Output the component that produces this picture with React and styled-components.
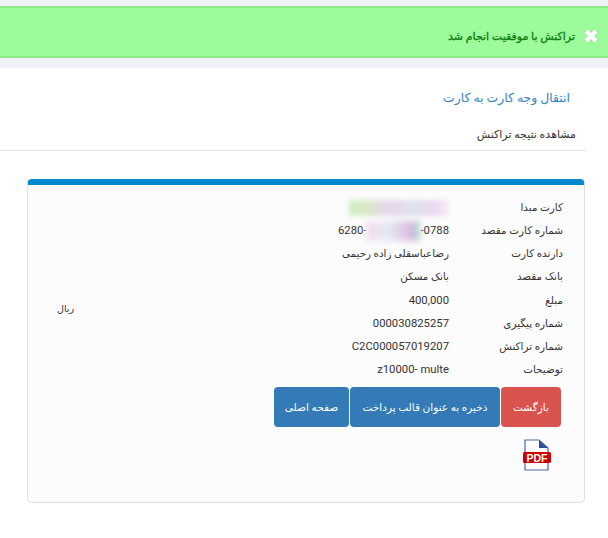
import React from "react"
import styled, { createGlobalStyle } from "styled-components"

const GlobalStyle = createGlobalStyle`
  html, body {
    margin: 0;
    background: #fff;
  }
  body {
    font-family: Roboto, "DejaVu Sans", sans-serif;
    font-size: 11px;
    color: #333;
  }
`

const Page = styled.div`
  direction: rtl;
  width: 608px;
  height: 538px;
  overflow: hidden;
`

const TopBand = styled.div`
  background: #f0f2f7;
  padding: 6px 0 10px;
`

const Alert = styled.div`
  height: 52px;
  box-sizing: border-box;
  border-top: 2px solid #8eec8e;
  border-bottom: 2px solid #8eec8e;
  background: #9cfc9c;
  color: #0f7a0f;
  font-size: 11px;
  -webkit-text-stroke: 0.3px #0f7a0f;
  display: flex;
  align-items: center;
  gap: 8px;
  padding: 8px 9px 0 0;
`

const CloseIcon = styled.svg`
  width: 16px;
  height: 16px;
  flex: none;
`

const PageTitle = styled.h1`
  margin: 0;
  padding: 20px 38px 0 0;
  height: 29px;
  line-height: 20px;
  font-size: 12.4px;
  font-weight: 400;
  color: #2f86c6;
`

const SubTitle = styled.div`
  width: 586px;
  box-sizing: border-box;
  margin-right: 22px;
  height: 34px;
  line-height: 22px;
  padding: 7px 10px 0 0;
  border-bottom: 1px solid #e3e3e3;
  font-size: 11px;
`

const Card = styled.section`
  box-sizing: border-box;
  width: 558px;
  height: 324px;
  margin: 28px 23px 0 0;
  padding: 11px 21px 0 0;
  background: #fcfcfc;
  border: 1px solid #e0e0e0;
  border-top: 6px solid #0088cc;
  border-radius: 5px;
`

const Details = styled.div`
  position: relative;
  width: 536px;
`

const Row = styled.div`
  display: grid;
  grid-template-columns: 114px 1fr;
  height: 23.15px;
  line-height: 23px;
  align-items: center;
`

const Label = styled.div`
  font-size: 10.4px;
  color: #333;
  white-space: nowrap;
`

const Value = styled.div`
  font-size: 10.3px;
  color: #333;
  white-space: nowrap;
`

const Latin = styled.span`
  direction: ltr;
  unicode-bidi: isolate;
  font-family: Roboto, sans-serif;
  font-size: 11.3px;
`

const Blurred = styled.span`
  display: inline-block;
  width: 100px;
  height: 16px;
  vertical-align: middle;
  filter: blur(2.5px);
  background: linear-gradient(
    90deg,
    #cdeec4 0%,
    #d8e8c8 18%,
    #e8d4ec 40%,
    #dfe2ee 62%,
    #ecd6f0 85%,
    #f6ecf8 100%
  );
`

const CardNumber = styled.span`
  direction: ltr;
  unicode-bidi: isolate;
  display: inline-flex;
  align-items: center;
  font-family: Roboto, sans-serif;
  font-size: 11.3px;
`

const Smudge = styled.span`
  display: inline-block;
  width: 54px;
  height: 20px;
  filter: blur(3px);
  background: linear-gradient(90deg, #f6dcf0 0%, #e6e9f4 40%, #dcc4e4 75%, #d0b8dc 88%, #9ee8c4 100%);
`

const Unit = styled.div`
  position: absolute;
  left: 30px;
  top: 104px;
  font-size: 9.5px;
  line-height: 18px;
`

const Actions = styled.div`
  display: flex;
  gap: 1px;
  margin: 6px 2px 0 0;
`

const Button = styled.button`
  height: 40px;
  width: ${p => p.$width}px;
  padding: 0;
  border: 0;
  border-radius: 4px;
  color: #fff;
  font: inherit;
  font-size: 10.5px;
  background: ${p => (p.$danger ? "#d9534f" : "#337ab7")};
`

const PdfIcon = styled.svg`
  display: block;
  width: 30px;
  height: 32px;
  margin: 12px 11px 0 0;
`

const rows = [
  ["کارت مبدا", <Blurred />],
  [
    "شماره کارت مقصد",
    <CardNumber>
      6280-
      <Smudge />
      -0788
    </CardNumber>,
  ],
  ["دارنده کارت", "رضاعباسقلی زاده رحیمی"],
  ["بانک مقصد", "بانک مسکن"],
  ["مبلغ", <Latin>400,000</Latin>],
  ["شماره پیگیری", <Latin>000030825257</Latin>],
  ["شماره تراکنش", <Latin>C2C000057019207</Latin>],
  ["توضیحات", <Latin>z10000- multe</Latin>],
]

const App = () => {
  return (
    <Page>
      <GlobalStyle />
      <TopBand>
        <Alert>
          <CloseIcon viewBox="0 0 16 16">
            <path
              d="M1 4.5 4.5 1 8 4.5 11.5 1 15 4.5 11.5 8 15 11.5 11.5 15 8 11.5 4.5 15 1 11.5 4.5 8Z"
              fill="#fff"
              stroke="#8fb09a"
              strokeWidth="0.5"
            />
          </CloseIcon>
          تراکنش با موفقیت انجام شد
        </Alert>
      </TopBand>
      <PageTitle>انتقال وجه کارت به کارت</PageTitle>
      <SubTitle>مشاهده نتیجه تراکنش</SubTitle>
      <Card>
        <Details>
          {rows.map(([label, value]) => (
            <Row key={label}>
              <Label>{label}</Label>
              <Value>{value}</Value>
            </Row>
          ))}
          <Unit>ریال</Unit>
        </Details>
        <Actions>
          <Button $danger $width={60}>بازگشت</Button>
          <Button $width={150}>ذخیره به عنوان قالب پرداخت</Button>
          <Button $width={75}>صفحه اصلی</Button>
        </Actions>
        <PdfIcon viewBox="0 0 30 32">
          <path d="M3 1H17L26 9V31H3Z" fill="#fff" stroke="#4a66ae" strokeWidth="1.2" />
          <path d="M17 1 26 9H17Z" fill="#2f4f9e" />
          <rect x="1" y="13" width="28" height="11" rx="1.5" fill="#cc0000" />
          <text
            x="15"
            y="22.5"
            textAnchor="middle"
            fontFamily="Liberation Sans, sans-serif"
            fontWeight="700"
            fontSize="10.5"
            fill="#fff"
            direction="ltr"
          >
            PDF
          </text>
        </PdfIcon>
      </Card>
    </Page>
  )
}

export default App
